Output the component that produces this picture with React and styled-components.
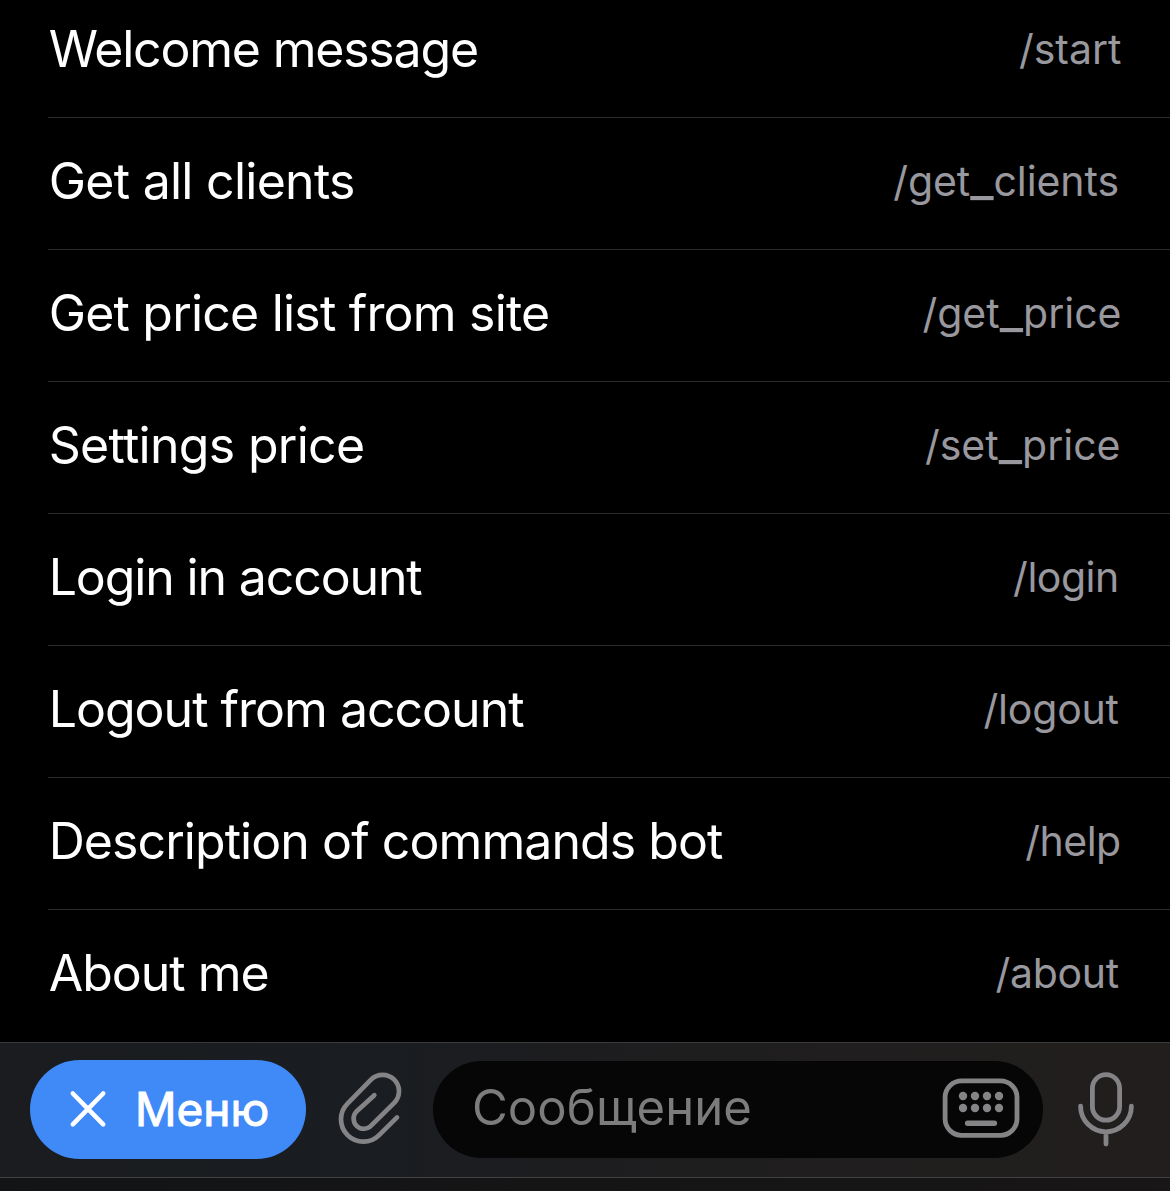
import React from 'react';
import styled, { createGlobalStyle } from 'styled-components';

const GlobalStyle = createGlobalStyle`
  * { box-sizing: border-box; }
  body {
    margin: 0;
    background: #000;
    font-family: Inter, "Liberation Sans", sans-serif;
    overflow: hidden;
  }
`;

const Screen = styled.main`
  display: flex;
  flex-direction: column;
  width: 1170px;
  height: 1191px;
  overflow: hidden;
  background: #000;
`;

const CommandList = styled.ul`
  list-style: none;
  margin: -14px 0 0;
  padding: 0 0 0 48px;
  flex: none;
`;

const CommandRow = styled.li`
  display: flex;
  align-items: center;
  justify-content: space-between;
  height: 132px;
  padding: 0 ${({ $end }) => $end}px 6px 0.7px;
  border-bottom: 1px solid #2b2b2d;
  white-space: nowrap;

  &:last-child { border-bottom-color: transparent; }
`;

const Title = styled.span`
  color: #fff;
  font-size: 50px;
  line-height: 60px;
  letter-spacing: ${({ $spacing }) => $spacing}px;
`;

const Command = styled.span`
  color: #98989e;
  font-size: 41px;
  line-height: 50px;
  letter-spacing: ${({ $spacing }) => $spacing}px;
`;

const Underscore = styled.span`
  font-size: 1.25em;
  line-height: 0;
`;

const InputBar = styled.footer`
  display: flex;
  align-items: center;
  flex: none;
  height: 135px;
  padding: 0 34px 2px 30px;
  border-top: 1px solid #3a3a3c;
  background: linear-gradient(90deg, #1a1c1f 0%, #1a1d21 32%, #1d1d1f 50%, #201e1e 72%, #221e1e 100%);
`;

const MenuButton = styled.button`
  display: flex;
  align-items: center;
  width: 276px;
  height: 99px;
  padding: 0 0 0 38px;
  border: 0;
  border-radius: 50px;
  background: #3f8af7;
  color: #fff;
  font: 400 46px/56px Inter, "Liberation Sans", sans-serif;
`;

const MenuLabel = styled.span`
  margin: -1px 0 0 27px;
  letter-spacing: 0;
  -webkit-text-stroke: 1px #fff;
  stroke-linejoin: round;
`;

const IconButton = styled.button`
  display: flex;
  flex: none;
  margin: ${({ $margin }) => $margin};
  padding: 0;
  border: 0;
  background: none;
  color: #848385;
`;

const Field = styled.div`
  display: flex;
  align-items: center;
  justify-content: space-between;
  width: 610px;
  height: 97px;
  padding: 0 22px 0 39px;
  border-radius: 49px;
  background: #060606;
`;

const Placeholder = styled.span`
  margin-top: -2px;
  color: #7c7c7c;
  font-size: 49px;
  line-height: 60px;
  letter-spacing: 0.08px;
`;

const Icon = styled.svg`
  display: block;
  fill: none;
  stroke: currentColor;
  stroke-width: ${({ $stroke }) => $stroke};
  stroke-linecap: round;
  stroke-linejoin: round;
`;

const BottomEdge = styled.div`
  flex: none;
  height: 14px;
  border-top: 1px solid #414143;
  background: linear-gradient(90deg, #131416, #151516 50%, #181617);
`;

const commands = [
  { title: 'Welcome message', command: '/start', spacing: -1.2, commandSpacing: 0, end: 48.5 },
  { title: 'Get all clients', command: '/get_clients', spacing: -0.73, commandSpacing: -0.08, end: 51 },
  { title: 'Get price list from site', command: '/get_price', spacing: -0.8, commandSpacing: 0, end: 48.5 },
  { title: 'Settings price', command: '/set_price', spacing: -0.7, commandSpacing: 0, end: 49.5 },
  { title: 'Login in account', command: '/login', spacing: -1.13, commandSpacing: -0.5, end: 51.3 },
  { title: 'Logout from account', command: '/logout', spacing: -1, commandSpacing: -0.2, end: 51.2 },
  { title: 'Description of commands bot', command: '/help', spacing: -0.93, commandSpacing: -0.5, end: 49.3 },
  { title: 'About me', command: '/about', spacing: -1, commandSpacing: -0.3, end: 51.2 },
];

const CommandName = ({ value, spacing }) => {
  const [head, tail] = value.split('_');
  return (
    <Command $spacing={spacing}>
      {head}
      {tail && <Underscore>_</Underscore>}
      {tail}
    </Command>
  );
};

const CloseIcon = () => (
  <Icon width="40" height="40" viewBox="68 1089 40 40" $stroke={4.6}>
    <path d="M72.8 1093.5l30.4 30.8M103.2 1093.5l-30.4 30.8" />
  </Icon>
);

const ClipIcon = () => (
  <Icon width="68" height="76" viewBox="336 1070 68 76" $stroke={4.7}>
    <path d="M397 1117.4L379.1 1135.1A22.3 22.3 0 0 1 347.5 1103.6L371 1079.7A16.4 16.4 0 0 1 394.2 1102.9L370.6 1126.2A10.2 10.2 0 0 1 356.2 1111.8L374.3 1095.2" />
  </Icon>
);

const KeyboardIcon = () => (
  <Icon width="80" height="64" viewBox="941 1076 80 64" $stroke={4.8}>
    <rect x="945.1" y="1080.9" width="71.9" height="54.4" rx="16.5" />
    <path d="M967.6 1123.2h26.8" strokeWidth="5.4" />
    <g fill="currentColor" stroke="none">
      {[1096, 1108].map((y) =>
        [963, 975, 987, 999].map((x) => <circle key={`${x}-${y}`} cx={x} cy={y} r="4.2" />)
      )}
    </g>
  </Icon>
);

const MicIcon = () => (
  <Icon width="60" height="80" viewBox="1076 1069 60 80" $stroke={4.8}>
    <rect x="1092.4" y="1074.6" width="27.2" height="45.6" rx="13.6" />
    <path d="M1080.6 1106.2a25.4 25.6 0 0 0 50.8 0M1106 1132v12" />
  </Icon>
);

export default function App() {
  return (
    <>
      <GlobalStyle />
      <Screen>
        <CommandList>
          {commands.map(({ title, command, spacing, commandSpacing, end }) => (
            <CommandRow key={command} $end={end}>
              <Title $spacing={spacing}>{title}</Title>
              <CommandName value={command} spacing={commandSpacing} />
            </CommandRow>
          ))}
        </CommandList>
        <InputBar>
          <MenuButton>
            <CloseIcon />
            <MenuLabel>Меню</MenuLabel>
          </MenuButton>
          <IconButton $margin="-3px 29px 0 30px" aria-label="Attach">
            <ClipIcon />
          </IconButton>
          <Field>
            <Placeholder>Сообщение</Placeholder>
            <IconButton $margin="-3px 0 0" aria-label="Keyboard">
              <KeyboardIcon />
            </IconButton>
          </Field>
          <IconButton $margin="0 0 0 33px" aria-label="Voice">
            <MicIcon />
          </IconButton>
        </InputBar>
        <BottomEdge />
      </Screen>
    </>
  );
}
